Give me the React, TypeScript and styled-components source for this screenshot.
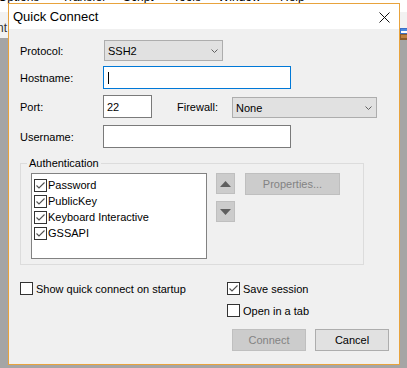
import React from "react";
import styled, { createGlobalStyle } from "styled-components";

const Global = createGlobalStyle`
  html, body { margin: 0; padding: 0; }
  body {
    background: #a5a5a5;
    overflow: hidden;
    font-family: "Liberation Sans", Arial, sans-serif;
    font-size: 11px;
    color: #000;
  }
  * { box-sizing: border-box; }
`;

const Desktop = styled.div`
  position: relative;
  width: 407px;
  height: 368px;
  background: #a5a5a5;
  overflow: hidden;
`;

const MenuBar = styled.div`
  display: flex;
  height: 12px;
  background: #fff;
  overflow: hidden;
  padding-left: 0;
`;

const MenuItem = styled.div<{ $w: number; $ml?: number }>`
  width: ${(p) => p.$w}px;
  margin-left: ${(p) => p.$ml ?? 0}px;
  flex: none;
  font-size: 12px;
  line-height: 14px;
  margin-top: -10px;
  white-space: nowrap;
`;

const ToolStrip = styled.div`
  display: flex;
  justify-content: space-between;
  align-items: flex-start;
  height: 26px;
  background: #f2f2f2;
`;

const StripText = styled.div`
  font-size: 12px;
  line-height: 14px;
  margin-top: 9px;
  margin-left: -3px;
  color: #333;
`;

const StripIcon = styled.svg`
  margin-top: 16px;
  margin-right: -1px;
`;

const Window = styled.div`
  position: absolute;
  left: 8px;
  top: 3px;
  width: 392px;
  height: 362px;
  border: 1px solid #e8a33d;
  display: flex;
  flex-direction: column;
  background: #f0f0f0;
`;

const TitleBar = styled.div`
  height: 25px;
  background: #fff;
  display: flex;
  align-items: center;
  justify-content: space-between;
  padding-left: 4px;
  padding-right: 9px;
`;

const Title = styled.div`
  font-size: 13px;
  line-height: 25px;
`;

const CloseIcon = styled.svg`
  display: block;
  margin-top: 1px;
`;

const Content = styled.div`
  flex: 1;
  display: flex;
  flex-direction: column;
  padding: 11px 10px 0 11px;
`;

const Row = styled.div<{ $mt?: number; $h: number }>`
  display: flex;
  align-items: center;
  height: ${(p) => p.$h}px;
  margin-top: ${(p) => p.$mt ?? 0}px;
`;

const Label = styled.div<{ $w: number; $ml?: number }>`
  width: ${(p) => p.$w}px;
  margin-left: ${(p) => p.$ml ?? 0}px;
  flex: none;
  white-space: nowrap;
`;

const Select = styled.div<{ $w: number; $mt?: number }>`
  width: ${(p) => p.$w}px;
  height: 21px;
  margin-top: ${(p) => p.$mt ?? 0}px;
  background: #e1e1e1;
  border: 1px solid #adadad;
  display: flex;
  align-items: center;
  justify-content: space-between;
  padding: 0 4px 0 3px;
`;

const Chevron = styled.svg`
  display: block;
`;

const Input = styled.div<{ $w: number; $focused?: boolean }>`
  width: ${(p) => p.$w}px;
  height: 23px;
  background: #fff;
  border: 1px solid ${(p) => (p.$focused ? "#0078d7" : "#7a7a7a")};
  display: flex;
  align-items: center;
  padding-left: 3px;
`;

const Caret = styled.span`
  display: block;
  width: 1px;
  height: 12px;
  background: #000;
  margin-left: 1px;
`;

const Group = styled.fieldset`
  margin: 8px 0 0 0;
  width: 344px;
  border: 1px solid #dcdcdc;
  padding: 3px 10px 5px 10px;
  display: flex;
`;

const Legend = styled.legend`
  margin-left: -4px;
  padding: 0 2px;
  font-size: 11px;
  line-height: 14px;
`;

const ListBox = styled.div`
  width: 176px;
  height: 86px;
  background: #fff;
  border: 1px solid #828282;
  padding: 3px 2px;
  display: flex;
  flex-direction: column;
`;

const ListItem = styled.label<{ $gap: number }>`
  display: flex;
  align-items: center;
  height: 16px;
  gap: ${(p) => p.$gap}px;
  white-space: nowrap;
`;

const Box = styled.span`
  display: block;
  width: 13px;
  height: 13px;
  border: 1px solid #333;
  background: #fff;
  flex: none;
  position: relative;
`;

const Side = styled.div`
  display: flex;
  margin-left: 9px;
  padding-top: 0;
`;

const ArrowCol = styled.div`
  display: flex;
  flex-direction: column;
  gap: 7px;
`;

const ArrowBtn = styled.div`
  width: 19px;
  height: 21px;
  background: #cccccc;
  border: 1px solid #bfbfbf;
  display: flex;
  align-items: center;
  justify-content: center;
`;

const Button = styled.div<{ $w: number; $disabled?: boolean }>`
  width: ${(p) => p.$w}px;
  height: 22px;
  flex: none;
  background: ${(p) => (p.$disabled ? "#cccccc" : "#e1e1e1")};
  border: 1px solid ${(p) => (p.$disabled ? "#bfbfbf" : "#adadad")};
  color: ${(p) => (p.$disabled ? "#838383" : "#000")};
  display: flex;
  align-items: center;
  justify-content: center;
`;

const PropsButton = styled(Button)`
  margin-left: 10px;
`;

const Options = styled.div`
  display: flex;
  margin-top: 17px;
`;

const OptCol = styled.div<{ $w?: number }>`
  display: flex;
  flex-direction: column;
  gap: 9px;
  width: ${(p) => (p.$w ? `${p.$w}px` : "auto")};
`;

const CheckRow = styled.label`
  display: flex;
  align-items: center;
  height: 13px;
  gap: 3px;
  white-space: nowrap;
`;

const ButtonRow = styled.div`
  display: flex;
  justify-content: flex-end;
  gap: 9px;
  margin-top: 12px;
`;

const CheckMark = () => (
  <svg width="11" height="11" viewBox="0 0 11 11" style={{ display: "block" }}>
    <path d="M1.5 5.5 L4 8 L9.5 2.5" fill="none" stroke="#505050" strokeWidth="1.1" />
  </svg>
);

const Check = ({ checked }: { checked?: boolean }) => (
  <Box>{checked ? <CheckMark /> : null}</Box>
);

const Down = () => (
  <Chevron width="7" height="4" viewBox="0 0 7 4">
    <path d="M0.5 0.5 L3.5 3.5 L6.5 0.5" fill="none" stroke="#606060" strokeWidth="1" />
  </Chevron>
);

export default function App() {
  return (
    <Desktop>
      <Global />
      <MenuBar>
        <MenuItem $w={64} $ml={-2}>Options</MenuItem>
        <MenuItem $w={61}>Transfer</MenuItem>
        <MenuItem $w={50}>Script</MenuItem>
        <MenuItem $w={45}>Tools</MenuItem>
        <MenuItem $w={62}>Window</MenuItem>
        <MenuItem $w={40}>Help</MenuItem>
      </MenuBar>
      <ToolStrip>
        <StripText>nt</StripText>
        <StripIcon width="8" height="12" viewBox="0 0 8 12">
          <rect x="0.5" y="0.5" width="7" height="5" fill="#fff" stroke="#3a6fc8" />
          <rect x="1" y="1" width="6" height="2" fill="#4a8ae0" />
          <rect x="0" y="6" width="8" height="6" fill="#8a5a2b" />
          <rect x="1" y="7" width="6" height="3" fill="#c08040" />
        </StripIcon>
      </ToolStrip>

      <Window>
        <TitleBar>
          <Title>Quick Connect</Title>
          <CloseIcon width="11" height="11" viewBox="0 0 11 11">
            <path d="M0.5 0.5 L10.5 10.5 M10.5 0.5 L0.5 10.5" stroke="#111" strokeWidth="1" />
          </CloseIcon>
        </TitleBar>
        <Content>
          <Row $h={21}>
            <Label $w={84}>Protocol:</Label>
            <Select $w={119}>
              <span>SSH2</span>
              <Down />
            </Select>
          </Row>
          <Row $h={23} $mt={5}>
            <Label $w={83}>Hostname:</Label>
            <Input $w={188} $focused>
              <Caret />
            </Input>
          </Row>
          <Row $h={23} $mt={6}>
            <Label $w={83}>Port:</Label>
            <Input $w={49}>22</Input>
            <Label $w={55} $ml={25}>Firewall:</Label>
            <Select $w={145} $mt={2}>
              <span>None</span>
              <Down />
            </Select>
          </Row>
          <Row $h={23} $mt={7}>
            <Label $w={83}>Username:</Label>
            <Input $w={188} />
          </Row>

          <Group>
            <Legend>Authentication</Legend>
            <ListBox>
              <ListItem $gap={1}><Check checked />Password</ListItem>
              <ListItem $gap={1}><Check checked />PublicKey</ListItem>
              <ListItem $gap={1}><Check checked />Keyboard Interactive</ListItem>
              <ListItem $gap={1}><Check checked />GSSAPI</ListItem>
            </ListBox>
            <Side>
              <ArrowCol>
                <ArrowBtn>
                  <svg width="11" height="6" viewBox="0 0 11 6">
                    <path d="M5.5 0 L11 6 L0 6 Z" fill="#5f5f5f" />
                  </svg>
                </ArrowBtn>
                <ArrowBtn>
                  <svg width="11" height="6" viewBox="0 0 11 6">
                    <path d="M0 0 L11 0 L5.5 6 Z" fill="#5f5f5f" />
                  </svg>
                </ArrowBtn>
              </ArrowCol>
              <PropsButton $w={95} $disabled>Properties...</PropsButton>
            </Side>
          </Group>

          <Options>
            <OptCol $w={207}>
              <CheckRow><Check />Show quick connect on startup</CheckRow>
            </OptCol>
            <OptCol>
              <CheckRow><Check checked />Save session</CheckRow>
              <CheckRow><Check />Open in a tab</CheckRow>
            </OptCol>
          </Options>

          <ButtonRow>
            <Button $w={74} $disabled>Connect</Button>
            <Button $w={74}>Cancel</Button>
          </ButtonRow>
        </Content>
      </Window>
    </Desktop>
  );
}
